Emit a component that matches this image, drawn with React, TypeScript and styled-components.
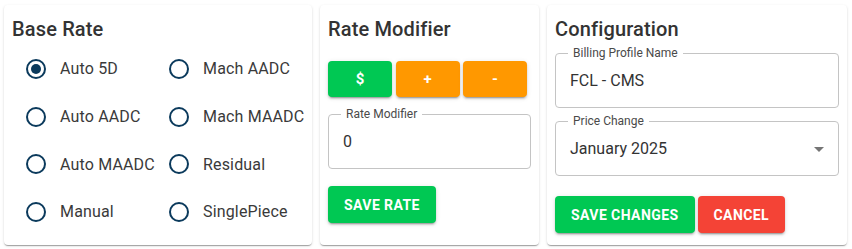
import React, { useState } from 'react';
import styled, { createGlobalStyle } from 'styled-components';

const GlobalStyle = createGlobalStyle`
  body {
    margin: 0;
    background: #ffffff;
    font-family: Roboto, "Noto Sans", Arial, sans-serif;
  }
`;

const rateOptions = [
  'Auto 5D',
  'Mach AADC',
  'Auto AADC',
  'Mach MAADC',
  'Auto MAADC',
  'Residual',
  'Manual',
  'SinglePiece',
];

const colors = {
  green: '#00c853',
  orange: '#ff9800',
  red: '#f44336',
};

export default function App() {
  const [baseRate, setBaseRate] = useState('Auto 5D');

  return (
    <>
      <GlobalStyle />
      <Page>
        <Panel $width={308}>
          <Title>Base Rate</Title>
          <RadioGrid>
            {rateOptions.map((opt) => (
              <RadioLabel key={opt} onClick={() => setBaseRate(opt)}>
                <RadioCircle $checked={baseRate === opt} />
                <span>{opt}</span>
              </RadioLabel>
            ))}
          </RadioGrid>
        </Panel>

        <Panel $width={219}>
          <Title>Rate Modifier</Title>
          <ButtonRow>
            <SmallButton $bg={colors.green}>$</SmallButton>
            <SmallButton $bg={colors.orange}>+</SmallButton>
            <SmallButton $bg={colors.orange}>-</SmallButton>
          </ButtonRow>
          <Field $mt={17}>
            <FieldLabel>Rate Modifier</FieldLabel>
            <FieldValue>0</FieldValue>
          </Field>
          <ActionRow $mt={17}>
            <ActionButton $bg={colors.green}>Save Rate</ActionButton>
          </ActionRow>
        </Panel>

        <Panel $width={300}>
          <Title>Configuration</Title>
          <Field $mt={8}>
            <FieldLabel>Billing Profile Name</FieldLabel>
            <FieldValue>FCL - CMS</FieldValue>
          </Field>
          <Field $mt={13}>
            <FieldLabel>Price Change</FieldLabel>
            <FieldValue>January 2025</FieldValue>
            <Arrow viewBox="0 0 24 24">
              <path d="M7 10l5 5 5-5z" fill="currentColor" />
            </Arrow>
          </Field>
          <ActionRow $mt={20}>
            <ActionButton $bg={colors.green}>Save Changes</ActionButton>
            <ActionButton $bg={colors.red}>Cancel</ActionButton>
          </ActionRow>
        </Panel>
      </Page>
    </>
  );
}

const Page = styled.div`
  display: flex;
  gap: 8px;
  padding: 5px 4px;
  align-items: flex-start;
`;

const Panel = styled.section<{ $width: number }>`
  width: ${({ $width }) => $width}px;
  height: 240px;
  box-sizing: border-box;
  padding: 8px;
  background: #fff;
  border-radius: 4px;
  box-shadow: 0 2px 1px -1px rgba(0, 0, 0, 0.2), 0 1px 1px 0 rgba(0, 0, 0, 0.14),
    0 1px 3px 0 rgba(0, 0, 0, 0.12);
  display: flex;
  flex-direction: column;
`;

const Title = styled.h2`
  margin: 0;
  font-size: 20px;
  font-weight: 500;
  line-height: 32px;
  color: #333;
  letter-spacing: 0.0075em;
`;

const RadioGrid = styled.div`
  display: grid;
  grid-template-columns: 143px 143px;
  grid-auto-rows: 47.7px;
  padding-left: 14px;
`;

const RadioLabel = styled.label`
  display: flex;
  align-items: center;
  gap: 14px;
  font-size: 16px;
  letter-spacing: 0.01em;
  color: #3a3a3a;
  cursor: pointer;
  white-space: nowrap;
`;

const RadioCircle = styled.span<{ $checked: boolean }>`
  width: 20px;
  height: 20px;
  box-sizing: border-box;
  border: 2px solid #0b3a5c;
  border-radius: 50%;
  flex-shrink: 0;
  display: flex;
  align-items: center;
  justify-content: center;

  &::after {
    content: '';
    width: 10px;
    height: 10px;
    border-radius: 50%;
    background: #0b3a5c;
    display: ${({ $checked }) => ($checked ? 'block' : 'none')};
  }
`;

const ButtonRow = styled.div`
  display: flex;
  gap: 3.5px;
  margin-top: 16px;
`;

const buttonShadow = `0 3px 1px -2px rgba(0,0,0,0.2), 0 2px 2px 0 rgba(0,0,0,0.14), 0 1px 5px 0 rgba(0,0,0,0.12)`;

const SmallButton = styled.button<{ $bg: string }>`
  width: 64px;
  height: 36px;
  border: none;
  border-radius: 4px;
  background: ${({ $bg }) => $bg};
  color: #fff;
  font-family: Roboto, Arial, sans-serif;
  font-size: 15px;
  font-weight: 700;
  box-shadow: ${buttonShadow};
  cursor: pointer;
`;

const Field = styled.div<{ $mt: number }>`
  position: relative;
  margin-top: ${({ $mt }) => $mt}px;
  height: 55px;
  box-sizing: border-box;
  border: 1px solid #c4c4c4;
  border-radius: 4px;
  display: flex;
  align-items: center;
  padding: 0 14px;
`;

const FieldLabel = styled.span`
  position: absolute;
  top: -8px;
  left: 12px;
  padding: 0 5px;
  background: #fff;
  font-size: 12px;
  line-height: 15px;
  color: #4a4a4a;
`;

const FieldValue = styled.span`
  font-size: 16px;
  color: #333;
  flex: 1;
`;

const Arrow = styled.svg`
  width: 24px;
  height: 24px;
  color: #757575;
  margin-right: -7px;
`;

const ActionRow = styled.div<{ $mt: number }>`
  display: flex;
  gap: 3px;
  margin-top: ${({ $mt }) => $mt}px;
`;

const ActionButton = styled.button<{ $bg: string }>`
  height: 37px;
  padding: 0 16px;
  border: none;
  border-radius: 4px;
  background: ${({ $bg }) => $bg};
  color: #fff;
  font-family: Roboto, Arial, sans-serif;
  font-size: 14px;
  font-weight: 700;
  text-transform: uppercase;
  letter-spacing: 0.03em;
  box-shadow: ${buttonShadow};
  cursor: pointer;
`;
